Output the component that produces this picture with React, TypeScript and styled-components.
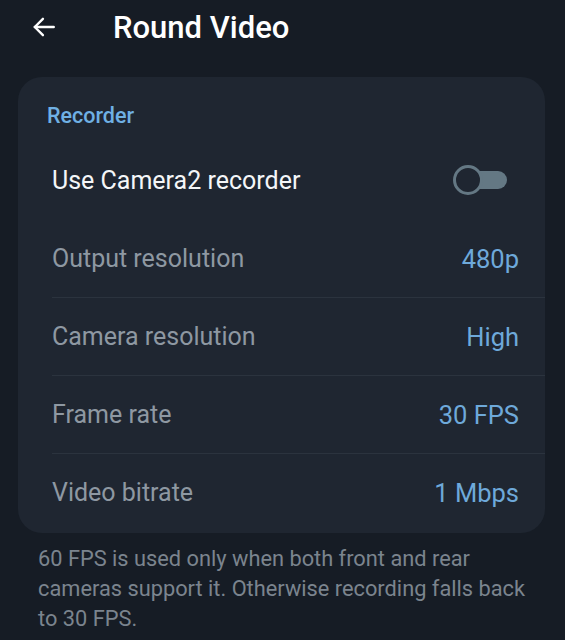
import React from "react";
import styled, { createGlobalStyle } from "styled-components";

const Global = createGlobalStyle`
  html, body { margin: 0; padding: 0; background: #161c25; }
  body { font-family: Roboto, "Noto Sans", sans-serif; -webkit-font-smoothing: antialiased; }
`;

const Page = styled.div`
  width: 565px;
  height: 640px;
  background: #161c25;
  overflow: hidden;
  box-sizing: border-box;
`;

const Header = styled.div`
  display: flex;
  align-items: center;
  height: 54px;
  padding: 0 0 0 30px;
`;

const BackButton = styled.div`
  width: 28px;
  height: 28px;
  display: flex;
  align-items: center;
  justify-content: center;
  margin-right: 55px;
`;

const Title = styled.h1`
  margin: 0;
  font-size: 31px;
  font-weight: 500;
  color: #ffffff;
  letter-spacing: 0;
`;

const Card = styled.div`
  margin: 23px 20px 0 18px;
  background: #1f2631;
  border-radius: 24px;
  padding: 25px 0 0 0;
  height: 456px;
  box-sizing: border-box;
`;

const SectionTitle = styled.div`
  padding-left: 29px;
  font-size: 21.5px;
  font-weight: 500;
  color: #6fb0e4;
  line-height: 28px;
`;

const Row = styled.div<{ $divider?: boolean }>`
  display: flex;
  align-items: center;
  justify-content: space-between;
  height: 78px;
  margin-left: 34px;
  padding-right: 26px;
  border-top: ${(p) => (p.$divider ? "1px solid #2b333e" : "1px solid transparent")};
  box-sizing: border-box;
`;

const Label = styled.span<{ $muted?: boolean }>`
  font-size: 25px;
  color: ${(p) => (p.$muted ? "#8e98a2" : "#f4f6f8")};
`;

const Value = styled.span`
  font-size: 25.5px;
  color: #6ea9da;
`;

const Switch = styled.div`
  position: relative;
  width: 54px;
  height: 30px;
  display: flex;
  align-items: center;
  margin-right: 12px;
`;

const Track = styled.div`
  margin-left: 2px;
  width: 52px;
  height: 18px;
  border-radius: 9px;
  background: #647884;
`;

const Thumb = styled.div`
  position: absolute;
  left: 0;
  top: 0;
  width: 30px;
  height: 30px;
  box-sizing: border-box;
  border-radius: 50%;
  border: 3px solid #647884;
  background: #1f2631;
`;

const FirstRow = styled(Row)`
  height: 79px;
  margin-top: 10px;
`;

const Footer = styled.p`
  margin: 11px 28px 0 38px;
  font-size: 21.8px;
  line-height: 30px;
  color: #7b848e;
`;

const rows = [
  { label: "Output resolution", value: "480p", divider: false },
  { label: "Camera resolution", value: "High", divider: true },
  { label: "Frame rate", value: "30 FPS", divider: true },
  { label: "Video bitrate", value: "1 Mbps", divider: true },
];

export default function App() {
  return (
    <Page>
      <Global />
      <Header>
        <BackButton>
          <svg width="26" height="26" viewBox="0 0 24 24" fill="none" stroke="#ffffff" strokeWidth="2.2" strokeLinecap="round" strokeLinejoin="round">
            <path d="M21 12H3.5" />
            <path d="M11 4.5 3.5 12l7.5 7.5" />
          </svg>
        </BackButton>
        <Title>Round Video</Title>
      </Header>
      <Card>
        <SectionTitle>Recorder</SectionTitle>
        <FirstRow>
          <Label>Use Camera2 recorder</Label>
          <Switch>
            <Track />
            <Thumb />
          </Switch>
        </FirstRow>
        {rows.map((r) => (
          <Row key={r.label} $divider={r.divider}>
            <Label $muted>{r.label}</Label>
            <Value>{r.value}</Value>
          </Row>
        ))}
      </Card>
      <Footer>
        60 FPS is used only when both front and rear cameras support it. Otherwise recording falls back to 30 FPS.
      </Footer>
    </Page>
  );
}
